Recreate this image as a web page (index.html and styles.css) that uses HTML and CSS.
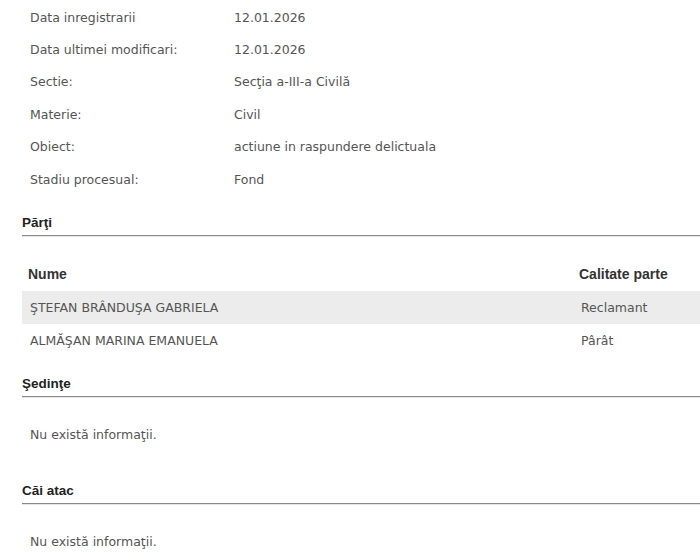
FILE: index.html
```html
<!DOCTYPE html>
<html lang="ro">
<head>
    <meta charset="UTF-8">
    <title>Detalii dosar</title>
    <link rel="stylesheet" href="styles.css">
</head>
<body>
    <div class="dosar">
        <div class="detalii">
            <div class="rand"><span class="eticheta">Data inregistrarii</span><span>12.01.2026</span></div>
            <div class="rand"><span class="eticheta">Data ultimei modificari:</span><span>12.01.2026</span></div>
            <div class="rand"><span class="eticheta">Sectie:</span><span>Secţia a-III-a Civilă</span></div>
            <div class="rand"><span class="eticheta">Materie:</span><span>Civil</span></div>
            <div class="rand"><span class="eticheta">Obiect:</span><span>actiune in raspundere delictuala</span></div>
            <div class="rand"><span class="eticheta">Stadiu procesual:</span><span>Fond</span></div>
        </div>

        <h2 class="sectiune">Părţi</h2>
        <div class="parti">
            <div class="parti-cap"><span>Nume</span><span class="calitate">Calitate parte</span></div>
            <div class="parte gri"><span>ŞTEFAN BRÂNDUŞA GABRIELA</span><span class="calitate">Reclamant</span></div>
            <div class="parte"><span>ALMĂŞAN MARINA EMANUELA</span><span class="calitate">Pârât</span></div>
        </div>

        <h2 class="sectiune">Şedinţe</h2>
        <p class="gol">Nu există informaţii.</p>

        <h2 class="sectiune">Căi atac</h2>
        <p class="gol">Nu există informaţii.</p>
    </div>
</body>
</html>
```

FILE: styles.css
```css
body {
    margin: 0;
    background: #ffffff;
    font-family: "DejaVu Sans", Verdana, sans-serif;
    font-size: 12.5px;
    color: #555555;
    overflow: hidden;
}
.dosar {
    padding-left: 22px;
}
.detalii {
    padding-top: 1px;
}
.rand {
    display: grid;
    grid-template-columns: 204px 1fr;
    height: 32.4px;
    align-items: center;
    padding-left: 8px;
}
.sectiune {
    margin: 0;
    font-family: "Liberation Sans", Arial, sans-serif;
    font-size: 13.5px;
    font-weight: bold;
    color: #222222;
    border-bottom: 1px solid #8a8a8a;
    box-shadow: 0 1px 0 #e6e6e6;
    padding: 0 0 5px 0;
}
.detalii + .sectiune {
    margin-top: 20px;
}
.parti {
    margin-top: 21px;
    margin-bottom: 20px;
}
.parti-cap {
    display: grid;
    grid-template-columns: 1fr 121px;
    height: 34px;
    box-sizing: border-box;
    padding-bottom: 1px;
    align-items: center;
    padding-left: 6px;
    font-family: "Liberation Sans", Arial, sans-serif;
    font-weight: bold;
    font-size: 14px;
    color: #333333;
}
.parte {
    display: grid;
    grid-template-columns: 1fr 119px;
    height: 32.5px;
    align-items: center;
    padding-left: 8px;
}
.gri {
    background: #ececec;
}
.gol {
    margin: 0;
    height: 86px;
    padding-left: 8px;
    padding-top: 30px;
    box-sizing: border-box;
}
```
